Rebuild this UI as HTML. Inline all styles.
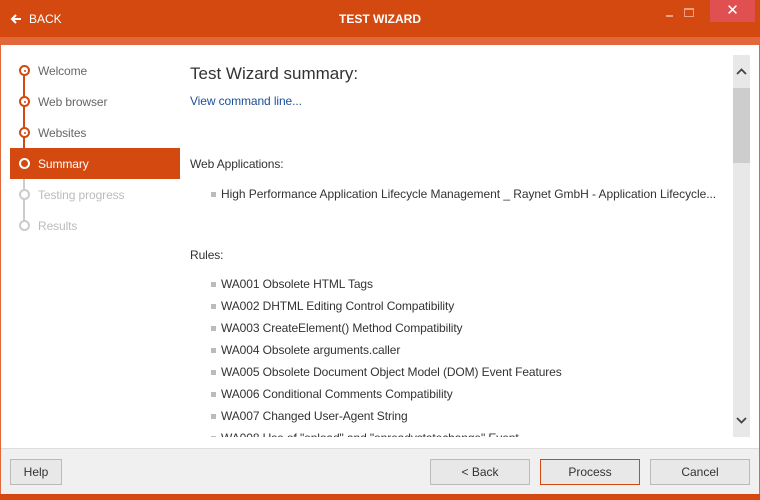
<!DOCTYPE html>
<html><head><meta charset="utf-8"><style>
*{margin:0;padding:0;box-sizing:border-box}
body{width:760px;height:500px;overflow:hidden;background:#fff;font-family:"Liberation Sans",sans-serif;font-size:12px;color:#333;position:relative}
.a{position:absolute;white-space:nowrap}
.tb{left:0;top:0;width:760px;height:37px;background:#d4490f}
.band{left:0;top:37px;width:760px;height:8px;background:#e2673a}
.bl{left:0;top:45px;width:1px;height:450px;background:#e2673a}
.br{right:0;top:45px;width:1px;height:450px;background:#e2673a}
.foot{left:1px;top:448px;width:758px;height:46px;background:#f0f0f0;border-top:1px solid #ddd}
.bot{left:0;top:494px;width:760px;height:6px;background:#d4490f}
.nav{left:38px;font-size:12px;color:#666;letter-spacing:-0.1px}
.c{width:11px;height:11px;border-radius:50%;border:2px solid #d4490f;left:19px;background:#fff}
.c::after{content:"";position:absolute;left:2.5px;top:2.5px;width:2px;height:2px;border-radius:50%;background:#d4490f}
.c.g{border-color:#ccc}.c.g::after{background:none}
.t{font-size:12px;color:#333;letter-spacing:-0.1px}
.sq{width:5px;height:5px;background:#bbb;left:211px}
.btn{top:459px;height:26px;border:1px solid #bbb;background:#e8e8e8;text-align:center;line-height:24px;font-size:12px;color:#333}
</style></head><body>
<div class="a tb"></div>
<div class="a band"></div>
<div class="a bl"></div><div class="a br"></div>
<svg class="a" style="left:10px;top:13px" width="12" height="12" viewBox="0 0 12 12"><path d="M11 6H2M6 2L2 6l4 4" stroke="#fff" stroke-width="2" fill="none"/></svg>
<div class="a" style="left:29px;top:12px;color:#fff;font-size:12px">BACK</div>
<div class="a" style="left:0;width:760px;text-align:center;top:12px;color:#fff;font-weight:bold;font-size:12px">TEST WIZARD</div>
<div class="a" style="left:666px;top:15px;width:7px;height:2px;background:#f0a080"></div>
<div class="a" style="left:684px;top:8px;width:10px;height:9px;border:1px solid #f0a080;border-top-width:2px"></div>
<div class="a" style="left:710px;top:0;width:45px;height:22px;background:#e05050;color:#fff;text-align:center;font-size:15px;line-height:22px">✕</div>

<div class="a" style="left:23px;top:76px;width:2px;height:88px;background:#d4490f"></div>
<div class="a" style="left:23px;top:164px;width:2px;height:62px;background:#ccc"></div>
<div class="a" style="left:10px;top:148px;width:170px;height:31px;background:#d4490f"></div>
<div class="a c" style="top:65px"></div><div class="a nav" style="top:64px">Welcome</div>
<div class="a c" style="top:96px"></div><div class="a nav" style="top:95px">Web browser</div>
<div class="a c" style="top:127px"></div><div class="a nav" style="top:126px">Websites</div>
<div class="a c" style="top:158px;border-color:#fff;background:#d4490f"></div><div class="a nav" style="top:157px;color:#fff">Summary</div>
<div class="a c g" style="top:189px"></div><div class="a nav" style="top:188px;color:#bbb">Testing progress</div>
<div class="a c g" style="top:220px"></div><div class="a nav" style="top:219px;color:#bbb">Results</div>

<div style="position:absolute;left:190px;top:55px;width:540px;height:382px;overflow:hidden">
<div class="a" style="left:0;top:9px;font-size:17px;color:#333">Test Wizard summary:</div>
<div class="a t" style="left:0;top:39px;color:#1e4e9a">View command line...</div>
<div class="a t" style="left:0;top:102px">Web Applications:</div>
<div class="a sq" style="left:21px;top:137px"></div>
<div class="a t" style="left:31px;top:132px;letter-spacing:-0.05px">High Performance Application Lifecycle Management _ Raynet GmbH - Application Lifecycle...</div>
<div class="a t" style="left:0;top:193px">Rules:</div>
<div class="a sq" style="left:21px;top:227px"></div><div class="a t" style="left:31px;top:222px">WA001 Obsolete HTML Tags</div>
<div class="a sq" style="left:21px;top:249px"></div><div class="a t" style="left:31px;top:244px">WA002 DHTML Editing Control Compatibility</div>
<div class="a sq" style="left:21px;top:271px"></div><div class="a t" style="left:31px;top:266px">WA003 CreateElement() Method Compatibility</div>
<div class="a sq" style="left:21px;top:293px"></div><div class="a t" style="left:31px;top:288px">WA004 Obsolete arguments.caller</div>
<div class="a sq" style="left:21px;top:315px"></div><div class="a t" style="left:31px;top:310px">WA005 Obsolete Document Object Model (DOM) Event Features</div>
<div class="a sq" style="left:21px;top:337px"></div><div class="a t" style="left:31px;top:332px">WA006 Conditional Comments Compatibility</div>
<div class="a sq" style="left:21px;top:359px"></div><div class="a t" style="left:31px;top:354px">WA007 Changed User-Agent String</div>
<div class="a sq" style="left:21px;top:381px"></div><div class="a t" style="left:31px;top:376px">WA008 Use of "onload" and "onreadystatechange" Event</div>
</div>

<div class="a" style="left:733px;top:55px;width:17px;height:382px;background:#e8e8e8"></div>
<div class="a" style="left:733px;top:88px;width:17px;height:75px;background:#cdcdcd"></div>
<svg class="a" style="left:736px;top:67px" width="11" height="8"><path d="M1 7L5.5 2.5L10 7" stroke="#444" stroke-width="1.8" fill="none"/></svg>
<svg class="a" style="left:736px;top:417px" width="11" height="8"><path d="M1 1L5.5 5.5L10 1" stroke="#444" stroke-width="1.8" fill="none"/></svg>

<div class="a foot"></div>
<div class="a bot"></div>
<div class="a btn" style="left:10px;width:52px">Help</div>
<div class="a btn" style="left:430px;width:100px">&lt; Back</div>
<div class="a btn" style="left:540px;width:100px;border-color:#d4490f">Process</div>
<div class="a btn" style="left:650px;width:100px">Cancel</div>
</body></html>
